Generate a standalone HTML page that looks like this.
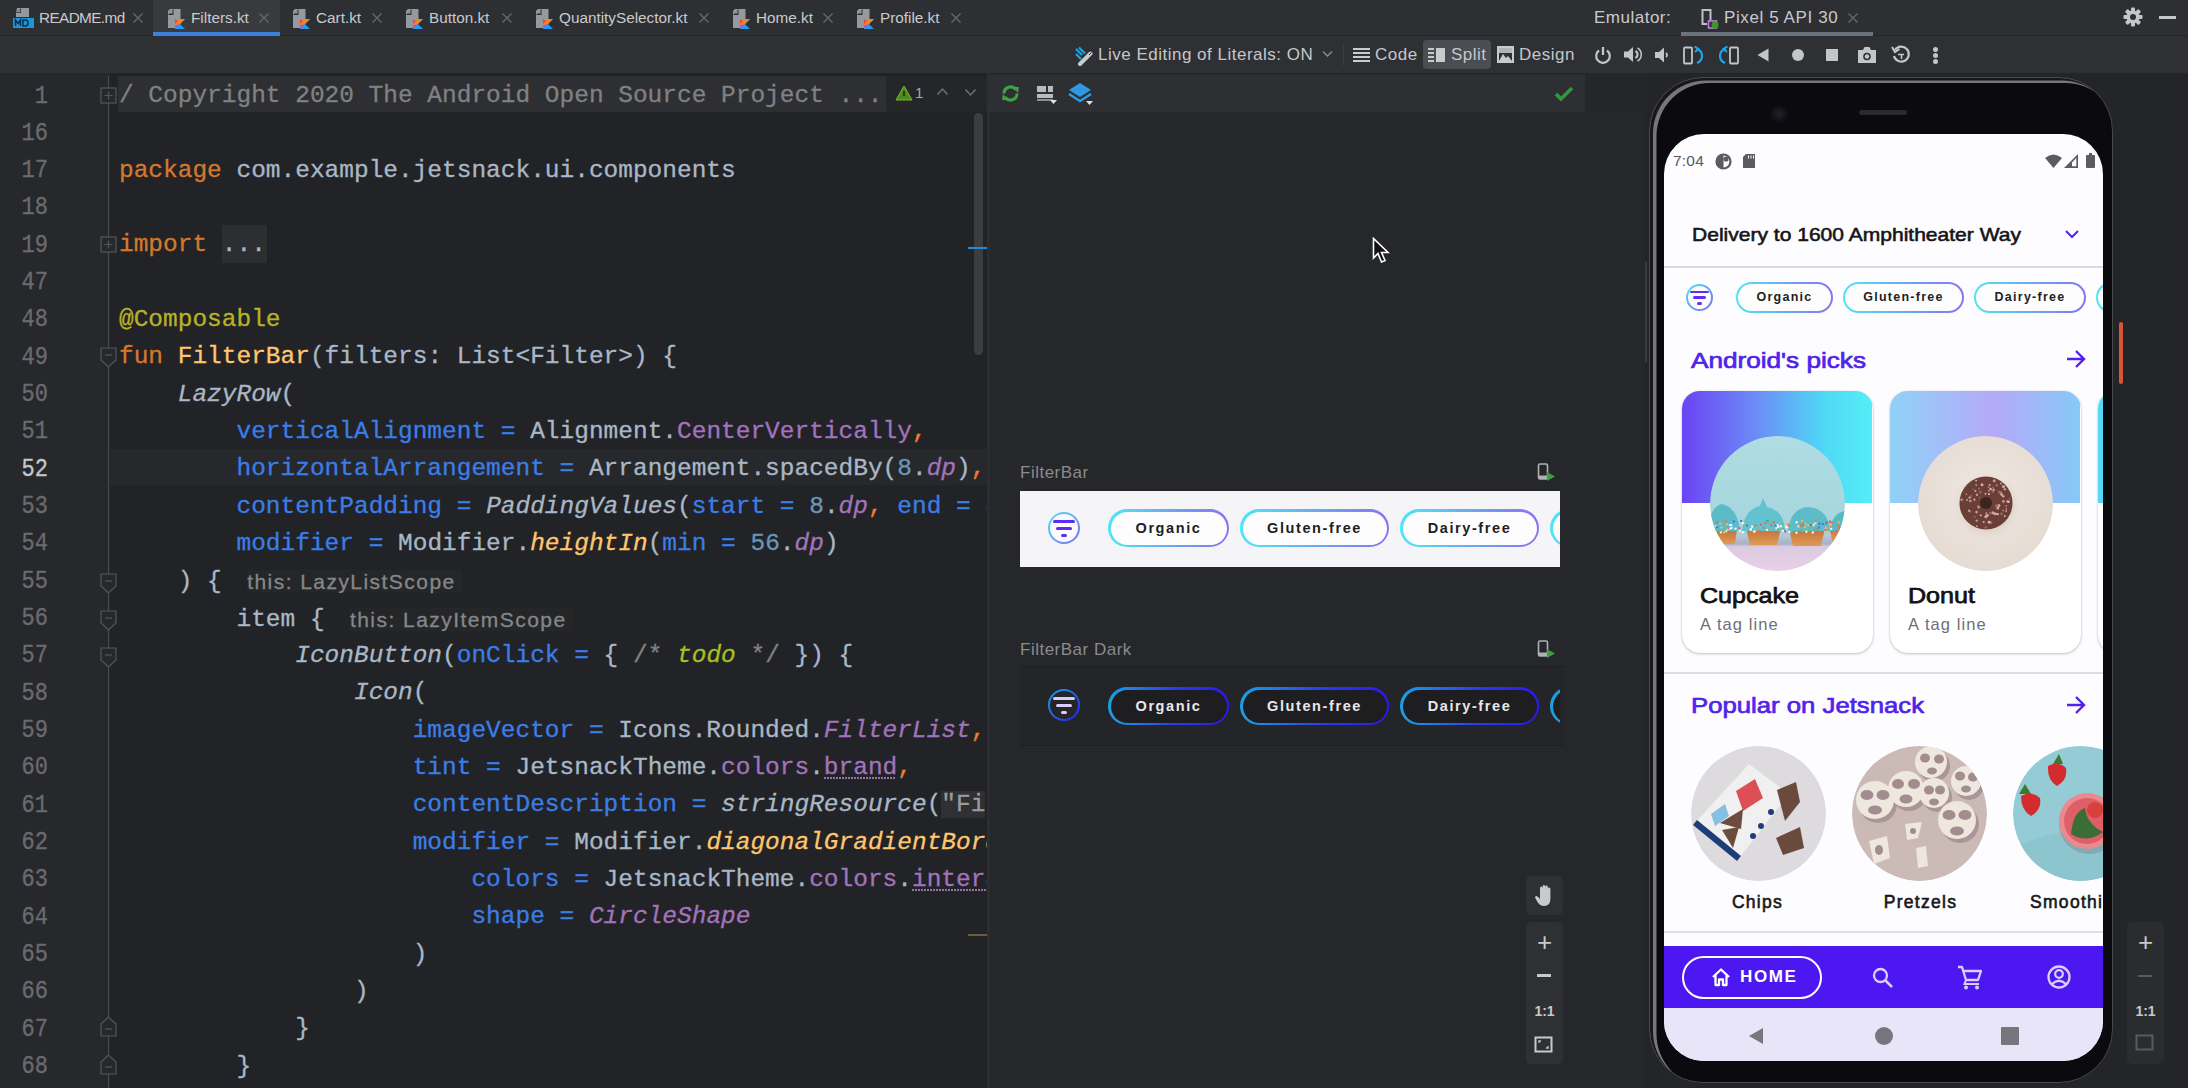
<!DOCTYPE html>
<html><head><meta charset="utf-8">
<style>
*{margin:0;padding:0;box-sizing:border-box}
html,body{width:2188px;height:1088px;overflow:hidden;background:#242528}
body{position:relative;font-family:"Liberation Sans",sans-serif}
.abs{position:absolute}
#tabbar{left:0;top:0;width:2188px;height:36px;background:#2e2f33;border-bottom:1px solid #252629}
#toolbar{left:0;top:36px;width:2188px;height:37px;background:#2f3034}
.tab{position:absolute;top:0;height:36px;font-size:15.3px;color:#c9cacc;line-height:36px;white-space:nowrap}
.tabx{position:absolute;top:0;height:36px;font-size:17px;color:#6b6c70;line-height:35px}
.tb{position:absolute;top:36px;height:37px;line-height:37px;font-size:17px;color:#c6c7c9;white-space:nowrap;letter-spacing:0.5px}
/* editor */
#gutter{left:0;top:73px;width:110px;height:1015px;background:#27282b}
#editor{left:110px;top:73px;width:877px;height:1015px;background:#222326;overflow:hidden}
.ln{position:absolute;left:0;width:48px;text-align:right;font-family:"Liberation Mono",monospace;font-size:22px;color:#6a6b6f;height:37.33px;line-height:37.33px;transform:scaleY(1.18);-webkit-text-stroke:0.3px currentColor}
.cl{position:absolute;left:119px;font-family:"Liberation Mono",monospace;font-size:24.48px;color:#a9b7c6;white-space:pre;height:37.33px;line-height:37.33px;-webkit-text-stroke:0.3px currentColor}
.k{color:#d5782d}.an{color:#b8b22a}.fn{color:#ffc66d}.p{color:#3b7de6}.pu{color:#a273bd}.nu{color:#6897bb}.it{font-style:italic}
.cm{color:#808184}.str{background:#2f3033;color:#9a9b9e}.td{color:#a8c023;font-style:italic}.cmm{color:#ee7d30}
.hint{font-family:"Liberation Sans",sans-serif;font-size:21px;color:#86878a;background:#252628;letter-spacing:1.45px;padding:0 6px 0 0;margin-left:-4px;position:relative;top:1px}
#design{left:990px;top:73px;width:655px;height:1015px;background:#26272a}
#emu{left:1645px;top:73px;width:543px;height:1015px;background:#242528}

.lbl{font-size:17px;color:#8a8b8e;letter-spacing:0.5px;line-height:22px;white-space:nowrap}
.ficon{position:absolute;width:32px;height:32px;border-radius:50%;background:linear-gradient(135deg,#4fe3f3,#7c6cf0) ;}
.ficon::before{content:"";position:absolute;left:2px;top:2px;right:2px;bottom:2px;border-radius:50%;background:#fbfafc}
.ficon i{position:absolute;height:3px;background:#5b2ef2;border-radius:1.5px}
.ficon.dk{background:linear-gradient(135deg,#18a8e6,#2a1cf2)}
.ficon.dk::before{background:#242528}
.ficon.dk i{background:#d9cdf5}
.chip{position:absolute;top:18px;height:38px;border-radius:19px;background:linear-gradient(90deg,#4fe6f5,#6f9ef2 60%,#8a73f0);font-weight:bold;font-size:14.5px;letter-spacing:1.6px;color:#1f1e22;text-align:center;line-height:38px;overflow:hidden}
.chip::before{content:"";position:absolute;left:2.5px;top:2.5px;right:2.5px;bottom:2.5px;border-radius:17px;background:#fdfdfe;z-index:-0}
.chip{isolation:isolate}
.chip::before{z-index:-1}
.chip.dk{top:20px;background:linear-gradient(90deg,#19a4e3,#2a3cf0 55%,#2a17f5);color:#e8e8ea}
.chip.dk::before{background:#1e1d20}
.zc{width:37px;text-align:center;color:#c8c9cc;line-height:30px}

.ficon.sm{width:27px;height:27px}
.ficon.sm i{height:2.6px}
.chip.sm{top:148px;height:31px;border-radius:16px;font-size:12.5px;letter-spacing:1.25px;line-height:31px}
.chip.sm::before{left:2.2px;top:2.2px;right:2.2px;bottom:2.2px;border-radius:14px}
.mont{white-space:nowrap;transform-origin:0 0;-webkit-text-stroke:0.55px currentColor}
.sect{font-size:22.5px;color:#5023ea;white-space:nowrap;line-height:30px;transform-origin:0 0;-webkit-text-stroke:0.7px currentColor}
.card{position:absolute;top:257px;width:191px;height:262px;border-radius:18px;background:#fff;overflow:hidden;box-shadow:0 1px 3px rgba(0,0,0,0.22),0 0 1px rgba(0,0,0,0.2)}
.img{width:135px;height:135px;border-radius:50%;overflow:hidden}
.ctitle{font-size:22.5px;color:#121114;line-height:28px;white-space:nowrap;transform-origin:0 0;-webkit-text-stroke:0.75px currentColor}
.ctag{font-size:16.5px;color:#707073;letter-spacing:1.1px;line-height:20px;white-space:nowrap}
.plbl{font-size:17.5px;color:#18171a;text-align:center;letter-spacing:1.3px;line-height:22px;white-space:nowrap;-webkit-text-stroke:0.6px currentColor}
.cup{background:
 radial-gradient(ellipse 20px 10px at 30% 70%, #c9803f 60%, transparent 62%),
 radial-gradient(ellipse 22px 12px at 57% 71%, #c67a3c 60%, transparent 62%),
 radial-gradient(ellipse 22px 12px at 82% 71%, #c67a3c 60%, transparent 62%),
 radial-gradient(ellipse 22px 14px at 32% 56%, #4aa9b8 60%, transparent 62%),
 radial-gradient(ellipse 24px 16px at 57% 55%, #4fb0bf 60%, transparent 62%),
 radial-gradient(ellipse 24px 15px at 83% 56%, #4aaab8 60%, transparent 62%),
 linear-gradient(180deg,#a5d7de 0%,#b2dde3 45%,#9cc9cf 58%,#c8a090 72%,#e3cbd8 82%,#e6cde2 100%)}
.don{background:
 radial-gradient(circle at 50% 50%, #3a2a25 0, #3a2a25 5px, #6e4035 7px, #7a4a3d 18px, #c9b3a8 22px, #e8ddd5 28px, #ede4dc 100%)}
.chips{background:
 radial-gradient(ellipse 14px 10px at 72% 55%, #6b4a3e 60%, transparent 64%),
 radial-gradient(ellipse 14px 12px at 70% 75%, #6b4a3e 60%, transparent 64%),
 radial-gradient(ellipse 30px 40px at 45% 55%, #e9e6ea 55%, transparent 62%),
 linear-gradient(160deg,#d6d5d9,#e1dfe3)}
.pretz{background:
 radial-gradient(circle 12px at 35% 40%, transparent 5px, #efe9e4 6px, #efe9e4 10px, transparent 11px),
 radial-gradient(circle 12px at 60% 28%, transparent 5px, #efe9e4 6px, #efe9e4 10px, transparent 11px),
 radial-gradient(circle 12px at 75% 50%, transparent 5px, #efe9e4 6px, #efe9e4 10px, transparent 11px),
 radial-gradient(circle 12px at 45% 65%, transparent 5px, #efe9e4 6px, #efe9e4 10px, transparent 11px),
 radial-gradient(circle 12px at 80% 20%, transparent 5px, #efe9e4 6px, #efe9e4 10px, transparent 11px),
 linear-gradient(160deg,#cdbcba,#c8b5b3)}
.smoo{background:
 radial-gradient(circle 10px at 40% 25%, #d3262e 70%, transparent 75%),
 radial-gradient(circle 10px at 25% 45%, #d3262e 70%, transparent 75%),
 radial-gradient(circle 30px at 80% 65%, #3d6e3a 20%, #d34b55 45%, #e98a8f 80%, transparent 84%),
 linear-gradient(160deg,#9ed3dc,#86c3cf)}
</style></head><body>

<div id="tabbar" class="abs"></div>
<div id="toolbar" class="abs"></div>
<!-- active tab -->
<div class="abs" style="left:153px;top:0;width:127px;height:36px;background:#393a3e"></div>
<div class="abs" style="left:153px;top:32px;width:127px;height:4px;background:#3d7fd9"></div>

<div class="tab" style="left:39px;letter-spacing:-0.6px">README.md</div>
<div class="tab" style="left:191px">Filters.kt</div>
<div class="tab" style="left:316px">Cart.kt</div>
<div class="tab" style="left:429px">Button.kt</div>
<div class="tab" style="left:559px">QuantitySelector.kt</div>
<div class="tab" style="left:756px">Home.kt</div>
<div class="tab" style="left:880px">Profile.kt</div>

<div class="tb" style="left:1098px">Live Editing of Literals: ON</div>
<div class="tb" style="left:1375px">Code</div>
<div class="abs" style="left:1423px;top:40px;width:68px;height:29px;background:#4a4d52;border-radius:4px"></div>
<div class="tb" style="left:1451px">Split</div>
<div class="tb" style="left:1519px">Design</div>

<div class="tab" style="left:1594px;font-size:17px;letter-spacing:0.5px">Emulator:</div>
<div class="tab" style="left:1724px;font-size:17px;letter-spacing:0.6px">Pixel 5 API 30</div>
<div class="abs" style="left:1681px;top:32px;width:192px;height:4px;background:#6c7279"></div>


<!-- TOP ICONS -->
<svg width="0" height="0" style="position:absolute">
 <defs>
  <symbol id="ktfile" viewBox="0 0 20 22">
   <path d="M3 1 L13.5 1 L13.5 12 L8 12 L8 20 L1 20 L1 3 Z" fill="#9599a0"/>
   <path d="M1 7 L6.5 1 L6.5 7 Z" fill="#2e2f33"/>
   <path d="M2 5.5 L5.5 2 L5.5 5.5 Z" fill="#9599a0"/>
   <path d="M8 11 L18 11 L13 16 L18 21 L8 21 Z" fill="#1f9af5"/>
   <path d="M8 11 L18 11 L8 21 Z" fill="#f28520"/>
   <path d="M8 16 L11 13.2 L8 11 Z" fill="#e44857"/>
   <path d="M8 21 L13 16 L8 17.5 Z" fill="#8a5df2"/>
  </symbol>
  <symbol id="xx" viewBox="0 0 12 12"><path d="M1.5 1.5 L10.5 10.5 M10.5 1.5 L1.5 10.5" stroke="#68696d" stroke-width="1.3"/></symbol>
 </defs>
</svg>
<!-- MD icon -->
<svg class="abs" style="left:12px;top:7px" width="23" height="22" viewBox="0 0 23 22">
 <path d="M5 1 L17 1 L17 10 L4 10 L4 6 Z" fill="#9599a0"/>
 <path d="M4 6 L9 1 L9 6 Z" fill="#2e2f33"/><path d="M5 5.2 L8.2 2 L8.2 5.2 Z" fill="#9599a0"/>
 <rect x="1" y="11" width="21" height="10" fill="#1a98d4"/>
 <path d="M3.5 19 L3.5 13 L6 16.5 L8.5 13 L8.5 19 M11 13 L11 19 L13.5 19 Q16 19 16 16 Q16 13 13.5 13 Z" stroke="#102a5a" stroke-width="1.5" fill="none"/>
</svg>
<svg class="abs" style="left:167px;top:8px" width="20" height="22"><use href="#ktfile"/></svg>
<svg class="abs" style="left:292px;top:8px" width="20" height="22"><use href="#ktfile"/></svg>
<svg class="abs" style="left:405px;top:8px" width="20" height="22"><use href="#ktfile"/></svg>
<svg class="abs" style="left:535px;top:8px" width="20" height="22"><use href="#ktfile"/></svg>
<svg class="abs" style="left:732px;top:8px" width="20" height="22"><use href="#ktfile"/></svg>
<svg class="abs" style="left:856px;top:8px" width="20" height="22"><use href="#ktfile"/></svg>
<svg class="abs" style="left:132px;top:12px" width="12" height="12"><use href="#xx"/></svg>
<svg class="abs" style="left:258px;top:12px" width="12" height="12"><use href="#xx"/></svg>
<svg class="abs" style="left:371px;top:12px" width="12" height="12"><use href="#xx"/></svg>
<svg class="abs" style="left:501px;top:12px" width="12" height="12"><use href="#xx"/></svg>
<svg class="abs" style="left:698px;top:12px" width="12" height="12"><use href="#xx"/></svg>
<svg class="abs" style="left:822px;top:12px" width="12" height="12"><use href="#xx"/></svg>
<svg class="abs" style="left:950px;top:12px" width="12" height="12"><use href="#xx"/></svg>
<svg class="abs" style="left:1847px;top:12px" width="12" height="12"><use href="#xx"/></svg>
<!-- pixel device icon -->
<svg class="abs" style="left:1701px;top:8px" width="20" height="21" viewBox="0 0 20 21">
 <path d="M9.5 12 L9.5 2 L1.5 2 L1.5 16 L6 16" stroke="#b9c0c8" stroke-width="2" fill="none"/>
 <rect x="7.5" y="13" width="8" height="7" stroke="#c07fe0" stroke-width="1.6" fill="none"/>
 <circle cx="14" cy="17" r="3.5" fill="#3a9a22"/>
</svg>
<!-- gear & minus -->
<svg class="abs" style="left:2123px;top:7px" width="20" height="20" viewBox="0 0 20 20">
 <g fill="#c4c5c8"><circle cx="10" cy="10" r="6.5"/>
 <rect x="8" y="0.5" width="4" height="19" rx="1"/><rect x="0.5" y="8" width="19" height="4" rx="1"/>
 <rect x="8" y="0.5" width="4" height="19" rx="1" transform="rotate(45 10 10)"/><rect x="8" y="0.5" width="4" height="19" rx="1" transform="rotate(-45 10 10)"/></g>
 <circle cx="10" cy="10" r="3" fill="#2e2f33"/>
</svg>
<div class="abs" style="left:2159px;top:16px;width:17px;height:3px;background:#c4c5c8"></div>

<!-- toolbar row icons -->
<svg class="abs" style="left:1074px;top:46px" width="21" height="20" viewBox="0 0 21 20">
 <path d="M2 3 L8 9 M5 1.5 L11 7.5 M2 8 L7 13" stroke="#1fa3e6" stroke-width="2.2"/>
 <path d="M6 18 L16.5 7.5" stroke="#c9cacc" stroke-width="4" stroke-linecap="round"/>
 <path d="M15 9 L17.5 6.5" stroke="#2f3034" stroke-width="1"/>
</svg>
<svg class="abs" style="left:1322px;top:50px" width="11" height="8" viewBox="0 0 11 8"><path d="M1 1.5 L5.5 6 L10 1.5" stroke="#8a8b8e" stroke-width="1.4" fill="none"/></svg>
<div class="abs" style="left:1343px;top:44px;width:1px;height:22px;background:#3a3b3f"></div>
<svg class="abs" style="left:1353px;top:47px" width="17" height="16" viewBox="0 0 17 16">
 <path d="M0 2 L17 2 M0 6 L17 6 M0 10 L17 10 M0 14 L17 14" stroke="#c9cacc" stroke-width="2"/>
</svg>
<svg class="abs" style="left:1428px;top:47px" width="18" height="16" viewBox="0 0 18 16">
 <path d="M0 2 L6 2 M0 6 L6 6 M0 10 L6 10 M0 14 L6 14" stroke="#c9cacc" stroke-width="2"/>
 <rect x="8" y="1" width="9" height="14" fill="#c9cacc"/>
</svg>
<svg class="abs" style="left:1497px;top:46px" width="17" height="17" viewBox="0 0 17 17">
 <rect x="1" y="1" width="15" height="15" stroke="#c9cacc" stroke-width="2" fill="none"/>
 <path d="M2 15 L6 8 L9 12 L11 10 L15 15 Z" fill="#c9cacc"/>
 <rect x="2" y="2" width="13" height="5" fill="#c9cacc" opacity="0.85"/>
</svg>
<!-- emulator controls -->
<g></g>
<svg class="abs" style="left:1594px;top:46px" width="18" height="18" viewBox="0 0 18 18">
 <path d="M5 4.5 A6.8 6.8 0 1 0 13 4.5" stroke="#c4c5c8" stroke-width="2.2" fill="none"/><path d="M9 1 L9 9" stroke="#c4c5c8" stroke-width="2.3"/>
</svg>
<svg class="abs" style="left:1623px;top:46px" width="19" height="17" viewBox="0 0 19 17">
 <path d="M1 5.5 L5 5.5 L10 1 L10 16 L5 11.5 L1 11.5 Z" fill="#c4c5c8"/>
 <path d="M12.5 5 A4 4 0 0 1 12.5 12" stroke="#c4c5c8" stroke-width="2.2" fill="none"/>
 <path d="M14.5 2 A7.5 7.5 0 0 1 14.5 15" stroke="#c4c5c8" stroke-width="1.5" fill="none"/>
</svg>
<svg class="abs" style="left:1654px;top:47px" width="15" height="16" viewBox="0 0 15 16">
 <path d="M1 5 L5 5 L10 0.5 L10 15.5 L5 11 L1 11 Z" fill="#c4c5c8"/>
 <path d="M12 6 A2.5 2.5 0 0 1 12 10" stroke="#c4c5c8" stroke-width="1.8" fill="none"/>
</svg>
<svg class="abs" style="left:1683px;top:46px" width="21" height="19" viewBox="0 0 21 19">
 <rect x="1" y="1.5" width="8" height="16" rx="1" stroke="#c4c5c8" stroke-width="1.8" fill="none"/>
 <path d="M13 3 Q19 4 19 10 Q19 15 14 17" stroke="#1fa3e6" stroke-width="2.2" fill="none"/><path d="M11.5 0.5 L15.5 3 L12 6" stroke="#1fa3e6" stroke-width="2" fill="none"/>
</svg>
<svg class="abs" style="left:1718px;top:46px" width="21" height="19" viewBox="0 0 21 19">
 <rect x="12" y="1.5" width="8" height="16" rx="1" stroke="#c4c5c8" stroke-width="1.8" fill="none"/>
 <path d="M8 3 Q2 4 2 10 Q2 15 7 17" stroke="#1fa3e6" stroke-width="2.2" fill="none"/><path d="M9.5 0.5 L5.5 3 L9 6" stroke="#1fa3e6" stroke-width="2" fill="none"/>
</svg>
<svg class="abs" style="left:1757px;top:48px" width="12" height="14" viewBox="0 0 12 14"><path d="M0.5 7 L11.5 0.5 L11.5 13.5 Z" fill="#c4c5c8"/></svg>
<div class="abs" style="left:1792px;top:49px;width:12px;height:12px;border-radius:50%;background:#c4c5c8"></div>
<div class="abs" style="left:1826px;top:49px;width:12px;height:12px;background:#c4c5c8"></div>
<svg class="abs" style="left:1857px;top:46px" width="20" height="18" viewBox="0 0 20 18">
 <path d="M1 4 L6 4 L7.5 1 L12.5 1 L14 4 L19 4 L19 17 L1 17 Z" fill="#c4c5c8"/>
 <circle cx="10" cy="10.5" r="3.8" fill="#2f3034"/><circle cx="10" cy="10.5" r="2.2" fill="#c4c5c8"/>
</svg>
<svg class="abs" style="left:1891px;top:45px" width="20" height="19" viewBox="0 0 20 19">
 <path d="M4 5 A7.5 7.5 0 1 1 3 11" stroke="#c4c5c8" stroke-width="2.2" fill="none"/><path d="M1 2 L4 7 L8.5 4" stroke="#c4c5c8" stroke-width="2" fill="none"/>
 <path d="M7 9.5 L13 9.5 M10.5 9.5 L10.5 14" stroke="#c4c5c8" stroke-width="1.6"/>
</svg>
<div class="abs" style="left:1933px;top:47px;width:5px;height:5px;border-radius:50%;background:#c4c5c8"></div>
<div class="abs" style="left:1933px;top:53px;width:5px;height:5px;border-radius:50%;background:#c4c5c8"></div>
<div class="abs" style="left:1933px;top:59px;width:5px;height:5px;border-radius:50%;background:#c4c5c8"></div>

<div id="gutter" class="abs"></div>
<div id="editor" class="abs"></div>
<div class="abs" id="code" style="left:0;top:0;width:987px;height:1088px;overflow:hidden">
<!-- folded line 1 highlight -->
<div class="abs" style="left:118px;top:76px;width:770px;height:36px;background:#2e2f32"></div>
<!-- current line 52 highlight -->
<div class="abs" style="left:110px;top:449px;width:877px;height:36px;background:#27282b"></div>
<!-- gutter fold line -->
<div class="abs" style="left:108px;top:76px;width:1px;height:1012px;background:#4a4b4f"></div>

<svg width="0" height="0" style="position:absolute"><defs>
 <symbol id="fdn" viewBox="0 0 17 21"><path d="M1 1 L16 1 L16 13 L8.5 20 L1 13 Z" fill="#27282b" stroke="#55565a" stroke-width="1.2"/><path d="M5 8 L12 8" stroke="#55565a" stroke-width="1.2"/></symbol>
 <symbol id="fup" viewBox="0 0 17 21"><path d="M1 20 L16 20 L16 8 L8.5 1 L1 8 Z" fill="#27282b" stroke="#55565a" stroke-width="1.2"/><path d="M5 13 L12 13" stroke="#55565a" stroke-width="1.2"/></symbol>
 <symbol id="fpl" viewBox="0 0 17 17"><rect x="1" y="1" width="15" height="15" fill="#27282b" stroke="#55565a" stroke-width="1.2"/><path d="M4.5 8.5 L12.5 8.5 M8.5 4.5 L8.5 12.5" stroke="#55565a" stroke-width="1.2"/></symbol>
</defs></svg>
<svg class="abs" style="left:100px;top:87px" width="17" height="17"><use href="#fpl"/></svg>
<svg class="abs" style="left:100px;top:236px" width="17" height="17"><use href="#fpl"/></svg>
<svg class="abs" style="left:100px;top:347px" width="17" height="21"><use href="#fdn"/></svg>
<svg class="abs" style="left:100px;top:573px" width="17" height="21"><use href="#fdn"/></svg>
<svg class="abs" style="left:100px;top:610px" width="17" height="21"><use href="#fdn"/></svg>
<svg class="abs" style="left:100px;top:647px" width="17" height="21"><use href="#fdn"/></svg>
<svg class="abs" style="left:100px;top:1016px" width="17" height="21"><use href="#fup"/></svg>
<svg class="abs" style="left:100px;top:1054px" width="17" height="21"><use href="#fup"/></svg>
<!-- import dots box -->
<div class="abs" style="left:222px;top:225px;width:45px;height:38px;background:#2d2e31"></div>
<!-- warning badge -->
<div class="abs" style="left:886px;top:76px;width:101px;height:35px;background:#252629"></div>
<svg class="abs" style="left:895px;top:85px" width="18" height="16" viewBox="0 0 18 16"><path d="M9 1 L17 15 L1 15 Z" fill="#4a8a1e" stroke="#7fb528" stroke-width="1"/><path d="M9 6 L9 11" stroke="#1d2d0a" stroke-width="1.6"/></svg>
<div class="abs" style="left:915px;top:83px;font-size:15px;color:#a8a9ac;line-height:20px">1</div>
<svg class="abs" style="left:936px;top:87px" width="13" height="9" viewBox="0 0 13 9"><path d="M1.5 7.5 L6.5 2 L11.5 7.5" stroke="#6f7074" stroke-width="1.5" fill="none"/></svg>
<svg class="abs" style="left:964px;top:88px" width="13" height="9" viewBox="0 0 13 9"><path d="M1.5 1.5 L6.5 7 L11.5 1.5" stroke="#6f7074" stroke-width="1.5" fill="none"/></svg>
<!-- scrollbar -->
<div class="abs" style="left:974px;top:113px;width:9px;height:242px;background:#3c3d41;border-radius:4.5px"></div>
<div class="abs" style="left:968px;top:247px;width:19px;height:2px;background:#2a8ad8"></div>
<div class="abs" style="left:968px;top:934px;width:19px;height:2px;background:#6e5a3a"></div>
<!-- underline / string bg -->
<div class="abs" style="left:824px;top:777px;width:72px;height:2px;background:repeating-linear-gradient(90deg,#8f74a5 0 2px,transparent 2px 3px)"></div>
<div class="abs" style="left:912px;top:889px;width:75px;height:2px;background:repeating-linear-gradient(90deg,#8f74a5 0 2px,transparent 2px 3px)"></div>
<div class="ln" style="top:77.50px">1</div>
<div class="cl" style="top:77.00px"><span class="cm">/ Copyright 2020 The Android Open Source Project ...</span></div>
<div class="ln" style="top:114.83px">16</div>
<div class="ln" style="top:152.16px">17</div>
<div class="cl" style="top:151.66px"><span class="k">package</span> com.example.jetsnack.ui.components</div>
<div class="ln" style="top:189.49px">18</div>
<div class="ln" style="top:226.82px">19</div>
<div class="cl" style="top:226.32px"><span class="k">import</span> <span class="dots">...</span></div>
<div class="ln" style="top:264.15px">47</div>
<div class="ln" style="top:301.48px">48</div>
<div class="cl" style="top:300.98px"><span class="an">@Composable</span></div>
<div class="ln" style="top:338.81px">49</div>
<div class="cl" style="top:338.31px"><span class="k">fun</span> <span class="fn">FilterBar</span>(filters: List&lt;Filter&gt;) {</div>
<div class="ln" style="top:376.14px">50</div>
<div class="cl" style="top:375.64px">    <span class="it">LazyRow</span>(</div>
<div class="ln" style="top:413.47px">51</div>
<div class="cl" style="top:412.97px">        <span class="p">verticalAlignment =</span> Alignment.<span class="pu">CenterVertically</span><span class="cmm">,</span></div>
<div class="ln" style="top:450.80px;color:#c5c6c9">52</div>
<div class="cl" style="top:450.30px">        <span class="p">horizontalArrangement =</span> Arrangement.spacedBy(<span class="nu">8</span>.<span class="pu it">dp</span>)<span class="cmm">,</span></div>
<div class="ln" style="top:488.13px">53</div>
<div class="cl" style="top:487.63px">        <span class="p">contentPadding =</span> <span class="it">PaddingValues</span>(<span class="p">start =</span> <span class="nu">8</span>.<span class="pu it">dp</span><span class="cmm">,</span> <span class="p">end =</span> <span class="nu">8</span></div>
<div class="ln" style="top:525.46px">54</div>
<div class="cl" style="top:524.96px">        <span class="p">modifier =</span> Modifier.<span class="fn it">heightIn</span>(<span class="p">min =</span> <span class="nu">56</span>.<span class="pu it">dp</span>)</div>
<div class="ln" style="top:562.79px">55</div>
<div class="cl" style="top:562.29px">    ) {  <span class="hint">this: LazyListScope</span></div>
<div class="ln" style="top:600.12px">56</div>
<div class="cl" style="top:599.62px">        item {  <span class="hint">this: LazyItemScope</span></div>
<div class="ln" style="top:637.45px">57</div>
<div class="cl" style="top:636.95px">            <span class="it">IconButton</span>(<span class="p">onClick =</span> { <span class="cm">/*</span> <span class="td">todo</span> <span class="cm">*/</span> }) {</div>
<div class="ln" style="top:674.78px">58</div>
<div class="cl" style="top:674.28px">                <span class="it">Icon</span>(</div>
<div class="ln" style="top:712.11px">59</div>
<div class="cl" style="top:711.61px">                    <span class="p">imageVector =</span> Icons.Rounded.<span class="pu it">FilterList</span><span class="cmm">,</span></div>
<div class="ln" style="top:749.44px">60</div>
<div class="cl" style="top:748.94px">                    <span class="p">tint =</span> JetsnackTheme.<span class="pu">colors</span>.<span class="pu ul">brand</span><span class="cmm">,</span></div>
<div class="ln" style="top:786.77px">61</div>
<div class="cl" style="top:786.27px">                    <span class="p">contentDescription =</span> <span class="it">stringResource</span>(<span class="str">"Fi</span></div>
<div class="ln" style="top:824.10px">62</div>
<div class="cl" style="top:823.60px">                    <span class="p">modifier =</span> Modifier.<span class="fn it">diagonalGradientBorder</span></div>
<div class="ln" style="top:861.43px">63</div>
<div class="cl" style="top:860.93px">                        <span class="p">colors =</span> JetsnackTheme.<span class="pu">colors</span>.<span class="pu ul">interactive</span></div>
<div class="ln" style="top:898.76px">64</div>
<div class="cl" style="top:898.26px">                        <span class="p">shape =</span> <span class="pu it">CircleShape</span></div>
<div class="ln" style="top:936.09px">65</div>
<div class="cl" style="top:935.59px">                    )</div>
<div class="ln" style="top:973.42px">66</div>
<div class="cl" style="top:972.92px">                )</div>
<div class="ln" style="top:1010.75px">67</div>
<div class="cl" style="top:1010.25px">            }</div>
<div class="ln" style="top:1048.08px">68</div>
<div class="cl" style="top:1047.58px">        }</div>
</div>
<div id="design" class="abs"></div>
<div id="emu" class="abs"></div>

<!-- EMULATOR -->
<!-- phone frame -->
<div class="abs" style="left:1649px;top:77px;width:464px;height:1006px;border-radius:54px;background:#0b0a0e;border:1.5px solid #48494d;box-shadow:inset 3px 2.5px 0 0 #18181b, inset 6.5px 5px 0 0 #76777b"></div>

<!-- camera & speaker -->
<div class="abs" style="left:1770px;top:105px;width:18px;height:18px;border-radius:50%;background:radial-gradient(circle,#1f2430 0,#121318 50%,#0b0a0e 80%)"></div>
<div class="abs" style="left:1859px;top:110px;width:48px;height:5px;border-radius:3px;background:#2a2a2e"></div>
<!-- screen -->
<div class="abs" id="screen" style="left:1664px;top:134px;width:439px;height:927px;border-radius:40px;background:#fdfcfe;overflow:hidden">
 <!-- status bar -->
 <div class="abs" style="left:9px;top:18px;font-size:15.5px;color:#5a5a5c;letter-spacing:0.2px">7:04</div>
 <svg class="abs" style="left:51px;top:19px" width="17" height="17" viewBox="0 0 17 17"><circle cx="8.5" cy="8.5" r="7" fill="none" stroke="#5c5c5e" stroke-width="2.2"/><path d="M8.5 1.5 A7 7 0 0 0 8.5 15.5 Z" fill="#5c5c5e"/><circle cx="11" cy="6" r="2.6" fill="#5c5c5e"/></svg>
 <svg class="abs" style="left:79px;top:20px" width="12" height="14" viewBox="0 0 12 14"><path d="M3 0 L12 0 L12 14 L0 14 L0 3 Z" fill="#5c5c5e"/><rect x="5" y="1.5" width="1" height="3" fill="#fdfcfe"/><rect x="7.5" y="1.5" width="1" height="3" fill="#fdfcfe"/><rect x="10" y="1.5" width="1" height="3" fill="#fdfcfe"/></svg>
 <svg class="abs" style="left:381px;top:20px" width="17" height="14" viewBox="0 0 17 14"><path d="M0 4 Q8.5 -3 17 4 L8.5 14 Z" fill="#5c5c5e"/></svg>
 <svg class="abs" style="left:400px;top:20px" width="14" height="14" viewBox="0 0 14 14"><path d="M14 0 L14 14 L0 14 Z" fill="#5c5c5e"/><path d="M12.3 4 L12.3 12.3 L8 12.3 L8 8.5 Z" fill="#fdfcfe"/></svg>
 <svg class="abs" style="left:422px;top:19px" width="9" height="15" viewBox="0 0 9 15"><rect x="0" y="2" width="9" height="13" rx="1" fill="#5c5c5e"/><rect x="3" y="0" width="3" height="2" fill="#5c5c5e"/></svg>

 <!-- delivery header -->
 <div class="abs mont" style="left:28px;top:89px;font-size:18.5px;color:#151417;line-height:24px;transform:scaleX(1.137)">Delivery to 1600 Amphitheater Way</div>
 <svg class="abs" style="left:400px;top:95px" width="16" height="10" viewBox="0 0 16 10"><path d="M2 2 L8 8 L14 2" stroke="#5023ea" stroke-width="2" fill="none"/></svg>
 <div class="abs" style="left:0;top:132px;width:439px;height:1.5px;background:#dcdbe0"></div>

 <!-- chips -->
 <div class="ficon sm" style="left:22px;top:150px"><i style="top:6.5px;left:4px;width:19px"></i><i style="top:12px;left:7px;width:13px"></i><i style="top:18px;left:11px;width:5px"></i></div>
 <div class="chip sm" style="left:72px;width:97px">Organic</div>
 <div class="chip sm" style="left:179px;width:121px">Gluten-free</div>
 <div class="chip sm" style="left:310px;width:112px">Dairy-free</div>
 <div class="chip sm" style="left:432px;width:100px"></div>

 <!-- android's picks -->
 <div class="abs sect" style="left:27px;top:212px;transform:scaleX(1.162)">Android's picks</div>
 <svg class="abs" style="left:401px;top:215px" width="22" height="20" viewBox="0 0 22 20"><path d="M2 10 L19 10 M11 2 L19 10 L11 18" stroke="#5520ef" stroke-width="2.4" fill="none"/></svg>

 <div class="card" style="left:18px">
  <div class="abs" style="left:0;top:0;width:190px;height:112px;background:linear-gradient(90deg,#6a43f4 0%,#6c8ef6 40%,#4fd9f5 75%,#55edf7 100%)"></div>
  <div class="abs img" style="left:28px;top:45px"><svg width="135" height="135" viewBox="0 0 135 135">
<defs><clipPath id="cc"><circle cx="67.5" cy="67.5" r="67.5"/></clipPath>
<linearGradient id="cupbg" x1="0" y1="0" x2="0" y2="1"><stop offset="0" stop-color="#b0dce3"/><stop offset="0.62" stop-color="#a6d6de"/><stop offset="0.74" stop-color="#b5c8d6"/><stop offset="0.8" stop-color="#aab0c8"/><stop offset="0.82" stop-color="#dccbe0"/><stop offset="1" stop-color="#e9d0e8"/></linearGradient>
<linearGradient id="case" x1="0" y1="0" x2="0" y2="1"><stop offset="0" stop-color="#c0703a"/><stop offset="1" stop-color="#e09a55"/></linearGradient>
</defs>
<g clip-path="url(#cc)">
<rect width="135" height="135" fill="url(#cupbg)"/>
<path d="M5 93 L27 93 L25 108 L8 108 Z" fill="url(#case)"/>
<path d="M36 92 L71 92 L67 109 L40 109 Z" fill="url(#case)"/>
<path d="M79 92 L115 92 L111 110 L83 110 Z" fill="url(#case)"/>
<path d="M120 88 L135 88 L135 106 L122 106 Z" fill="url(#case)"/>
<path d="M-2 95 Q0 70 12 68 Q28 72 30 95 Z" fill="#5bbcc8"/>
<path d="M32 95 Q34 74 50 70 L53 62 L57 71 Q74 74 75 95 Z" fill="#62c2ce"/>
<path d="M78 95 Q80 74 96 71 Q118 71 120 95 Z" fill="#5cbcc9"/>
<path d="M120 95 Q122 77 135 75 L135 95 Z" fill="#58b8c4"/>
<rect x="102.6" y="87.8" width="2" height="2" fill="#ffffff"/><rect x="56.5" y="84.2" width="2" height="2" fill="#3a7bd5"/><rect x="72.3" y="92.3" width="2" height="2" fill="#e8703a"/><rect x="108.4" y="86.7" width="2" height="2" fill="#3a7bd5"/><rect x="118.8" y="95.2" width="2" height="2" fill="#f2c14e"/><rect x="130.8" y="90.7" width="2" height="2" fill="#f2c14e"/><rect x="16.4" y="92.3" width="2" height="2" fill="#ffffff"/><rect x="89.4" y="94.6" width="2" height="2" fill="#e05a8a"/><rect x="90.1" y="92.8" width="2" height="2" fill="#6cc070"/><rect x="71.8" y="93.7" width="2" height="2" fill="#ffffff"/><rect x="0.7" y="85.7" width="2" height="2" fill="#e05a8a"/><rect x="6.0" y="85.1" width="2" height="2" fill="#e8703a"/><rect x="89.0" y="88.5" width="2" height="2" fill="#e8703a"/><rect x="46.1" y="94.2" width="2" height="2" fill="#e8703a"/><rect x="113.9" y="92.1" width="2" height="2" fill="#ffffff"/><rect x="128.6" y="90.9" width="2" height="2" fill="#e8703a"/><rect x="4.9" y="93.2" width="2" height="2" fill="#6cc070"/><rect x="71.4" y="86.9" width="2" height="2" fill="#6cc070"/><rect x="101.1" y="95.2" width="2" height="2" fill="#e8703a"/><rect x="74.3" y="94.4" width="2" height="2" fill="#3a7bd5"/><rect x="111.8" y="86.9" width="2" height="2" fill="#3a7bd5"/><rect x="87.2" y="89.4" width="2" height="2" fill="#ffffff"/><rect x="101.7" y="88.7" width="2" height="2" fill="#f2c14e"/><rect x="80.9" y="95.3" width="2" height="2" fill="#6cc070"/><rect x="56.5" y="85.0" width="2" height="2" fill="#6cc070"/><rect x="31.8" y="95.2" width="2" height="2" fill="#ffffff"/><rect x="130.6" y="89.0" width="2" height="2" fill="#6cc070"/><rect x="102.1" y="92.1" width="2" height="2" fill="#6cc070"/><rect x="92.6" y="85.9" width="2" height="2" fill="#e05a8a"/><rect x="121.1" y="85.8" width="2" height="2" fill="#e8703a"/><rect x="67.2" y="89.8" width="2" height="2" fill="#ffffff"/><rect x="69.8" y="89.3" width="2" height="2" fill="#ffffff"/><rect x="115.8" y="85.6" width="2" height="2" fill="#3a7bd5"/><rect x="19.8" y="90.2" width="2" height="2" fill="#3a7bd5"/><rect x="115.0" y="90.5" width="2" height="2" fill="#f2c14e"/><rect x="90.6" y="94.3" width="2" height="2" fill="#6cc070"/><rect x="115.2" y="91.0" width="2" height="2" fill="#f2c14e"/><rect x="120.1" y="87.7" width="2" height="2" fill="#f2c14e"/><rect x="64.7" y="88.6" width="2" height="2" fill="#3a7bd5"/><rect x="76.9" y="86.9" width="2" height="2" fill="#e05a8a"/><rect x="104.5" y="85.7" width="2" height="2" fill="#ffffff"/><rect x="64.7" y="91.2" width="2" height="2" fill="#e05a8a"/><rect x="78.4" y="94.8" width="2" height="2" fill="#ffffff"/><rect x="75.2" y="89.8" width="2" height="2" fill="#ffffff"/><rect x="9.8" y="95.4" width="2" height="2" fill="#ffffff"/><rect x="119.0" y="84.6" width="2" height="2" fill="#3a7bd5"/><rect x="120.3" y="91.8" width="2" height="2" fill="#ffffff"/><rect x="9.4" y="86.6" width="2" height="2" fill="#f2c14e"/><rect x="32.7" y="86.3" width="2" height="2" fill="#f2c14e"/><rect x="18.6" y="91.5" width="2" height="2" fill="#ffffff"/><rect x="115.9" y="94.8" width="2" height="2" fill="#f2c14e"/><rect x="22.9" y="84.5" width="2" height="2" fill="#3a7bd5"/><rect x="57.1" y="92.7" width="2" height="2" fill="#e8703a"/><rect x="15.9" y="87.2" width="2" height="2" fill="#f2c14e"/><rect x="4.9" y="89.4" width="2" height="2" fill="#ffffff"/><rect x="91.2" y="84.1" width="2" height="2" fill="#f2c14e"/><rect x="44.7" y="88.6" width="2" height="2" fill="#e8703a"/><rect x="28.4" y="91.0" width="2" height="2" fill="#e05a8a"/><rect x="52.8" y="90.5" width="2" height="2" fill="#e8703a"/><rect x="119.3" y="84.9" width="2" height="2" fill="#e05a8a"/><rect x="15.2" y="94.6" width="2" height="2" fill="#f2c14e"/><rect x="13.1" y="95.3" width="2" height="2" fill="#f2c14e"/><rect x="91.6" y="88.4" width="2" height="2" fill="#e05a8a"/><rect x="39.9" y="92.1" width="2" height="2" fill="#ffffff"/><rect x="127.5" y="93.8" width="2" height="2" fill="#e8703a"/><rect x="101.8" y="95.5" width="2" height="2" fill="#ffffff"/><rect x="76.4" y="90.3" width="2" height="2" fill="#ffffff"/><rect x="66.7" y="88.2" width="2" height="2" fill="#ffffff"/><rect x="39.7" y="92.7" width="2" height="2" fill="#ffffff"/><rect x="24.6" y="91.7" width="2" height="2" fill="#ffffff"/><rect x="20.2" y="88.4" width="2" height="2" fill="#ffffff"/><rect x="61.3" y="85.3" width="2" height="2" fill="#6cc070"/><rect x="19.1" y="88.0" width="2" height="2" fill="#ffffff"/><rect x="87.7" y="89.0" width="2" height="2" fill="#f2c14e"/><rect x="87.4" y="89.5" width="2" height="2" fill="#f2c14e"/><rect x="105.6" y="92.5" width="2" height="2" fill="#e8703a"/><rect x="96.6" y="93.1" width="2" height="2" fill="#6cc070"/><rect x="77.7" y="88.7" width="2" height="2" fill="#e8703a"/><rect x="35.9" y="88.6" width="2" height="2" fill="#3a7bd5"/><rect x="5.7" y="90.1" width="2" height="2" fill="#3a7bd5"/><rect x="93.9" y="90.2" width="2" height="2" fill="#f2c14e"/><rect x="127.6" y="89.4" width="2" height="2" fill="#e8703a"/><rect x="47.6" y="94.2" width="2" height="2" fill="#e8703a"/><rect x="20.5" y="91.1" width="2" height="2" fill="#ffffff"/><rect x="15.2" y="93.3" width="2" height="2" fill="#ffffff"/><rect x="15.1" y="92.4" width="2" height="2" fill="#6cc070"/><rect x="56.2" y="92.9" width="2" height="2" fill="#ffffff"/><rect x="17.3" y="91.3" width="2" height="2" fill="#e05a8a"/><rect x="107.8" y="90.5" width="2" height="2" fill="#3a7bd5"/><rect x="76.7" y="86.4" width="2" height="2" fill="#f2c14e"/><rect x="49.9" y="87.5" width="2" height="2" fill="#e05a8a"/><rect x="120.3" y="95.4" width="2" height="2" fill="#e05a8a"/><rect x="42.7" y="94.9" width="2" height="2" fill="#f2c14e"/><rect x="85.5" y="95.7" width="2" height="2" fill="#ffffff"/><rect x="95.4" y="94.7" width="2" height="2" fill="#ffffff"/><rect x="65.3" y="91.2" width="2" height="2" fill="#ffffff"/><rect x="85.6" y="85.3" width="2" height="2" fill="#ffffff"/><rect x="31.6" y="86.1" width="2" height="2" fill="#ffffff"/><rect x="62.2" y="86.3" width="2" height="2" fill="#6cc070"/><rect x="28.6" y="93.8" width="2" height="2" fill="#ffffff"/><rect x="127.8" y="85.3" width="2" height="2" fill="#f2c14e"/><rect x="129.5" y="94.7" width="2" height="2" fill="#3a7bd5"/><rect x="63.1" y="85.1" width="2" height="2" fill="#e8703a"/><rect x="3.4" y="91.4" width="2" height="2" fill="#6cc070"/><rect x="10.5" y="90.5" width="2" height="2" fill="#f2c14e"/><rect x="43.6" y="94.4" width="2" height="2" fill="#ffffff"/><rect x="93.6" y="85.0" width="2" height="2" fill="#6cc070"/><rect x="104.7" y="84.4" width="2" height="2" fill="#e8703a"/><rect x="99.9" y="88.1" width="2" height="2" fill="#3a7bd5"/><rect x="125.8" y="94.3" width="2" height="2" fill="#e05a8a"/><rect x="94.4" y="86.7" width="2" height="2" fill="#f2c14e"/><rect x="14.7" y="84.5" width="2" height="2" fill="#e8703a"/><rect x="114.1" y="92.5" width="2" height="2" fill="#e05a8a"/><rect x="67.1" y="92.4" width="2" height="2" fill="#6cc070"/><rect x="115.0" y="86.5" width="2" height="2" fill="#e05a8a"/><rect x="41.1" y="89.6" width="2" height="2" fill="#ffffff"/><rect x="54.2" y="86.2" width="2" height="2" fill="#e8703a"/><rect x="97.2" y="88.4" width="2" height="2" fill="#f2c14e"/><rect x="60.4" y="88.3" width="2" height="2" fill="#e05a8a"/><rect x="30.2" y="84.0" width="2" height="2" fill="#3a7bd5"/>
</g></svg></div>
  <div class="abs ctitle" style="left:18px;top:191px;transform:scaleX(1.115)">Cupcake</div>
  <div class="abs ctag" style="left:18px;top:223px">A tag line</div>
 </div>
 <div class="card" style="left:226px">
  <div class="abs" style="left:0;top:0;width:190px;height:112px;background:linear-gradient(90deg,#8fd2f7 0%,#a8b8f8 35%,#b5a9f9 55%,#86c9f7 100%)"></div>
  <div class="abs img" style="left:28px;top:45px"><svg width="135" height="135" viewBox="0 0 135 135">
<defs><radialGradient id="donbg" cx="0.5" cy="0.45" r="0.6"><stop offset="0" stop-color="#efe8e1"/><stop offset="1" stop-color="#e4dad2"/></radialGradient>
<radialGradient id="dsh" cx="0.5" cy="0.5" r="0.5"><stop offset="0.55" stop-color="#b9a89c" stop-opacity="0.45"/><stop offset="1" stop-color="#e8dfd7" stop-opacity="0"/></radialGradient></defs>
<circle cx="67.5" cy="67.5" r="67.5" fill="url(#donbg)"/>
<circle cx="69" cy="70" r="36" fill="url(#dsh)"/>
<circle cx="68" cy="67" r="26.5" fill="#6a3f36"/><circle cx="56.4" cy="63.7" r="1.1" fill="#d7a7a0"/><circle cx="85.1" cy="74.5" r="0.8" fill="#d7a7a0"/><circle cx="69.2" cy="79.3" r="1.6" fill="#d7a7a0"/><circle cx="51.6" cy="61.7" r="1.1" fill="#e0b8b8"/><circle cx="74.9" cy="76.7" r="1.5" fill="#d7a7a0"/><circle cx="58.2" cy="48.9" r="0.9" fill="#c9929a"/><circle cx="80.9" cy="69.5" r="1.5" fill="#d7a7a0"/><circle cx="83.9" cy="58.3" r="1.1" fill="#d7a7a0"/><circle cx="72.6" cy="53.0" r="1.2" fill="#e0b8b8"/><circle cx="86.8" cy="80.2" r="0.9" fill="#e0b8b8"/><circle cx="62.2" cy="56.1" r="1.4" fill="#9a6a60"/><circle cx="75.6" cy="53.9" r="1.3" fill="#d7a7a0"/><circle cx="82.8" cy="56.8" r="1.3" fill="#c9929a"/><circle cx="90.5" cy="65.7" r="1.3" fill="#e0b8b8"/><circle cx="58.8" cy="84.6" r="1.2" fill="#c9929a"/><circle cx="72.9" cy="86.5" r="1.5" fill="#9a6a60"/><circle cx="79.8" cy="72.0" r="1.5" fill="#d7a7a0"/><circle cx="71.0" cy="58.0" r="1.1" fill="#e0b8b8"/><circle cx="60.5" cy="70.7" r="1.1" fill="#c9929a"/><circle cx="61.4" cy="61.2" r="0.8" fill="#9a6a60"/><circle cx="83.3" cy="58.8" r="1.0" fill="#e0b8b8"/><circle cx="58.9" cy="90.2" r="0.9" fill="#c9929a"/><circle cx="91.7" cy="62.7" r="1.0" fill="#9a6a60"/><circle cx="78.3" cy="69.8" r="1.5" fill="#9a6a60"/><circle cx="77.1" cy="77.8" r="1.5" fill="#d7a7a0"/><circle cx="52.3" cy="65.0" r="1.3" fill="#c9929a"/><circle cx="85.3" cy="60.2" r="1.2" fill="#d7a7a0"/><circle cx="64.0" cy="48.7" r="1.5" fill="#d7a7a0"/><circle cx="43.6" cy="63.7" r="1.2" fill="#c9929a"/><circle cx="89.3" cy="65.3" r="1.1" fill="#d7a7a0"/><circle cx="55.5" cy="53.4" r="0.8" fill="#9a6a60"/><circle cx="61.2" cy="52.6" r="1.1" fill="#9a6a60"/><circle cx="88.3" cy="69.9" r="0.8" fill="#c9929a"/><circle cx="67.8" cy="91.4" r="1.2" fill="#9a6a60"/><circle cx="72.4" cy="77.1" r="1.4" fill="#9a6a60"/><circle cx="58.6" cy="76.1" r="1.4" fill="#c9929a"/><circle cx="58.1" cy="44.6" r="0.9" fill="#e0b8b8"/><circle cx="65.7" cy="86.0" r="1.1" fill="#d7a7a0"/><circle cx="83.6" cy="77.9" r="1.3" fill="#9a6a60"/><circle cx="71.1" cy="86.2" r="1.4" fill="#e0b8b8"/><circle cx="67.5" cy="57.7" r="1.0" fill="#d7a7a0"/><circle cx="70.9" cy="54.7" r="0.8" fill="#e0b8b8"/><circle cx="74.9" cy="55.6" r="1.3" fill="#9a6a60"/><circle cx="74.5" cy="54.8" r="0.9" fill="#9a6a60"/><circle cx="52.1" cy="75.6" r="1.2" fill="#9a6a60"/><circle cx="57.4" cy="55.1" r="1.0" fill="#d7a7a0"/><circle cx="60.6" cy="71.5" r="1.0" fill="#d7a7a0"/><circle cx="85.5" cy="50.5" r="1.6" fill="#d7a7a0"/><circle cx="85.4" cy="65.4" r="1.4" fill="#c9929a"/><circle cx="78.7" cy="49.3" r="1.3" fill="#9a6a60"/><circle cx="81.3" cy="56.0" r="1.5" fill="#9a6a60"/><circle cx="68.3" cy="77.0" r="0.8" fill="#e0b8b8"/><circle cx="86.8" cy="53.3" r="1.3" fill="#c9929a"/><circle cx="79.7" cy="78.1" r="1.2" fill="#e0b8b8"/><circle cx="49.0" cy="64.0" r="1.1" fill="#c9929a"/><circle cx="67.8" cy="80.8" r="1.5" fill="#d7a7a0"/><circle cx="88.2" cy="75.2" r="1.0" fill="#c9929a"/><circle cx="75.0" cy="51.4" r="0.9" fill="#9a6a60"/><circle cx="76.2" cy="44.8" r="1.5" fill="#c9929a"/><circle cx="53.3" cy="60.0" r="1.1" fill="#9a6a60"/><circle cx="59.0" cy="58.7" r="1.2" fill="#c9929a"/><circle cx="70.7" cy="51.2" r="0.8" fill="#c9929a"/><circle cx="88.3" cy="73.1" r="0.8" fill="#d7a7a0"/><circle cx="83.0" cy="47.5" r="0.9" fill="#d7a7a0"/><circle cx="62.7" cy="79.3" r="1.1" fill="#d7a7a0"/><circle cx="56.5" cy="80.8" r="1.0" fill="#9a6a60"/><circle cx="78.6" cy="78.0" r="0.8" fill="#d7a7a0"/><circle cx="48.3" cy="58.2" r="0.8" fill="#d7a7a0"/><circle cx="71.7" cy="49.1" r="1.1" fill="#c9929a"/><circle cx="51.1" cy="74.7" r="1.1" fill="#d7a7a0"/>
<circle cx="68" cy="67" r="6" fill="#3a2520"/>
</svg></div>
  <div class="abs ctitle" style="left:18px;top:191px;transform:scaleX(1.115)">Donut</div>
  <div class="abs ctag" style="left:18px;top:223px">A tag line</div>
 </div>
 <div class="card" style="left:434px">
  <div class="abs" style="left:0;top:0;width:190px;height:112px;background:linear-gradient(90deg,#55d8f5,#6a8ef6)"></div>
 </div>
 <div class="abs" style="left:0;top:538px;width:439px;height:2px;background:#dedde2"></div>

 <!-- popular -->
 <div class="abs sect" style="left:27px;top:557px;transform:scaleX(1.143)">Popular on Jetsnack</div>
 <svg class="abs" style="left:401px;top:561px" width="22" height="20" viewBox="0 0 22 20"><path d="M2 10 L19 10 M11 2 L19 10 L11 18" stroke="#5520ef" stroke-width="2.4" fill="none"/></svg>
 <div class="abs img" style="left:27px;top:612px"><svg width="135" height="135" viewBox="0 0 135 135">
<circle cx="67.5" cy="67.5" r="67.5" fill="#dddbdd"/>
<path d="M2 79 L58 18 L98 48 L46 115 Z" fill="#f1f0f0"/>
<path d="M2 79 L46 115 L50 110 L6 74 Z" fill="#1f3e78"/>
<path d="M45 45 L64 33 L72 52 L52 65 Z" fill="#d8333a" opacity="0.85"/>
<path d="M20 68 L34 58 L38 70 L24 80 Z" fill="#5aa9d8" opacity="0.7"/>
<circle cx="62" cy="90" r="3" fill="#1f3e78"/><circle cx="70" cy="80" r="3" fill="#1f3e78"/><circle cx="80" cy="66" r="3" fill="#1f3e78"/>
<path d="M29 77 L52 63 L50 83 Z" fill="#6b4c3e"/>
<path d="M31 84 L48 81 L42 102 Z" fill="#6b4c3e"/>
<path d="M86 44 L105 36 L109 56 L94 75 Z" fill="#6a4a3d"/>
<path d="M85 92 L109 81 L113 102 L92 109 Z" fill="#6a4a3d"/>
</svg></div>
 <div class="abs img" style="left:188px;top:612px"><svg width="135" height="135" viewBox="0 0 135 135">
<defs><clipPath id="pc"><circle cx="67.5" cy="67.5" r="67.5"/></clipPath></defs>
<g clip-path="url(#pc)">
<rect width="135" height="135" fill="#cbbab6"/>
<g fill="#a48d92" opacity="0.8">
<circle cx="26" cy="58" r="19"/><circle cx="57" cy="47" r="18"/><circle cx="82" cy="20" r="16"/><circle cx="85" cy="51" r="15"/><circle cx="117" cy="39" r="15"/><circle cx="108" cy="78" r="19"/>
</g>
<g fill="#ede7dd">
<circle cx="23" cy="54" r="19"/><circle cx="54" cy="43" r="18"/><circle cx="79" cy="16" r="16"/><circle cx="82" cy="47" r="15"/><circle cx="114" cy="35" r="15"/><circle cx="105" cy="74" r="19"/>
<path d="M17 95 L35 90 L38 112 L22 118 Z"/><path d="M53 78 L70 76 L66 92 L55 94 Z"/><path d="M64 102 L74 100 L76 120 L66 122 Z"/>
</g>
<g fill="#a38c90">
<ellipse cx="15" cy="49" rx="6.5" ry="5"/><ellipse cx="31" cy="49" rx="6.5" ry="5"/><ellipse cx="23" cy="64" rx="7" ry="4.5"/>
<ellipse cx="46" cy="38" rx="6" ry="5"/><ellipse cx="62" cy="38" rx="6" ry="5"/><ellipse cx="54" cy="53" rx="6.5" ry="4.5"/>
<ellipse cx="73" cy="12" rx="5" ry="4.5"/><ellipse cx="87" cy="13" rx="5" ry="4.5"/><ellipse cx="80" cy="25" rx="5" ry="3.5"/>
<ellipse cx="77" cy="44" rx="5" ry="4.5"/><ellipse cx="88" cy="44" rx="5" ry="4.5"/><ellipse cx="82" cy="56" rx="5" ry="3.5"/>
<ellipse cx="108" cy="30" rx="5" ry="4.5"/><ellipse cx="121" cy="31" rx="5" ry="4.5"/><ellipse cx="114" cy="43" rx="5" ry="3.5"/>
<ellipse cx="97" cy="69" rx="6.5" ry="5"/><ellipse cx="113" cy="69" rx="6.5" ry="5"/><ellipse cx="105" cy="85" rx="7" ry="4.5"/>
<ellipse cx="27" cy="104" rx="4" ry="5"/><ellipse cx="61" cy="85" rx="3" ry="3"/>
</g></g></svg></div>
 <div class="abs img" style="left:349px;top:612px"><svg width="135" height="135" viewBox="0 0 135 135">
<defs><clipPath id="sc"><circle cx="67.5" cy="67.5" r="67.5"/></clipPath></defs>
<g clip-path="url(#sc)">
<rect width="135" height="135" fill="#95cbd5"/>
<path d="M0 100 L135 60 L135 135 L0 135 Z" fill="#88c1cc" opacity="0.6"/>
<circle cx="76" cy="78" r="30" fill="#7e8e94" opacity="0.5"/>
<circle cx="74" cy="75" r="28" fill="#e88a8e"/>
<circle cx="74" cy="75" r="23" fill="#df5f68"/>
<path d="M58 88 Q60 66 72 62 Q74 78 90 86 Q74 98 58 88 Z" fill="#3b6e36"/>
<circle cx="82" cy="64" r="8" fill="#d8403a"/>
<path d="M35 20 Q45 14 53 22 Q55 34 44 40 Q34 34 35 20 Z" fill="#d42b2e"/>
<path d="M40 18 L46 8 L50 18 Z" fill="#3f7a2c"/>
<path d="M8 50 Q18 44 27 52 Q29 64 18 70 Q8 64 8 50 Z" fill="#d42b2e"/>
<path d="M6 48 L12 38 L18 48 Z" fill="#3f7a2c"/>
</g></svg></div>
 <div class="abs plbl" style="left:25px;width:137px;top:757px">Chips</div>
 <div class="abs plbl" style="left:188px;width:137px;top:757px">Pretzels</div>
 <div class="abs plbl" style="left:366px;width:137px;top:757px;text-align:left">Smoothies</div>
 <div class="abs" style="left:0;top:797px;width:439px;height:2px;background:#dedde2"></div>

 <!-- bottom nav -->
 <div class="abs" style="left:0;top:812px;width:439px;height:62px;background:#4d17f1"></div>
 <div class="abs" style="left:18px;top:822px;width:140px;height:43px;border:2.5px solid #fff;border-radius:22px"></div>
 <svg class="abs" style="left:46px;top:832px" width="22" height="22" viewBox="0 0 22 22"><path d="M3 11 L11 3.5 L19 11 M5.5 9 L5.5 19 L9 19 L9 13.5 L13 13.5 L13 19 L16.5 19 L16.5 9" stroke="#fff" stroke-width="2.3" fill="none" stroke-linejoin="round"/></svg>
 <div class="abs" style="left:76px;top:832px;font-size:17px;font-weight:bold;color:#fff;letter-spacing:1.6px;line-height:22px">HOME</div>
 <svg class="abs" style="left:207px;top:832px" width="24" height="24" viewBox="0 0 24 24"><circle cx="9.5" cy="9.5" r="6.5" stroke="#d8d0fb" stroke-width="2.3" fill="none"/><path d="M14.5 14.5 L21 21" stroke="#d8d0fb" stroke-width="2.5"/></svg>
 <svg class="abs" style="left:293px;top:831px" width="26" height="26" viewBox="0 0 26 26"><path d="M1 2 L5 2 L9 15 L21 15 L24 6 L7 6" stroke="#d8d0fb" stroke-width="2.3" fill="none" stroke-linejoin="round"/><path d="M9 15 L7.5 19 L22 19" stroke="#d8d0fb" stroke-width="2" fill="none"/><circle cx="9" cy="22.5" r="2" fill="#d8d0fb"/><circle cx="20" cy="22.5" r="2" fill="#d8d0fb"/></svg>
 <svg class="abs" style="left:382px;top:830px" width="26" height="26" viewBox="0 0 26 26"><circle cx="13" cy="13" r="10.5" stroke="#d8d0fb" stroke-width="2.3" fill="none"/><circle cx="13" cy="10" r="3.8" stroke="#d8d0fb" stroke-width="2.2" fill="none"/><path d="M6 20 Q13 13.5 20 20" stroke="#d8d0fb" stroke-width="2.2" fill="none"/></svg>

 <!-- system nav -->
 <div class="abs" style="left:0;top:874px;width:439px;height:60px;background:#e9e5f9"></div>
 <svg class="abs" style="left:84px;top:893px" width="16" height="18" viewBox="0 0 16 18"><path d="M1 9 L15 1 L15 17 Z" fill="#77767c"/></svg>
 <div class="abs" style="left:211px;top:893px;width:18px;height:18px;border-radius:50%;background:#77767c"></div>
 <div class="abs" style="left:337px;top:893px;width:18px;height:18px;background:#77767c;border-radius:1px"></div>
</div>
<div class="abs" style="left:1645px;top:262px;width:1.5px;height:100px;background:#3a3b3e"></div>
<!-- red side indicator -->
<div class="abs" style="left:2119px;top:322px;width:4px;height:62px;background:#d9553a;border-radius:2px"></div>

<!-- emulator zoom controls -->
<div class="abs" style="left:2127px;top:922px;width:37px;height:142px;background:#2b2c30;border-radius:5px"></div>
<div class="abs zc" style="left:2127px;top:927px;font-size:26px">+</div>
<div class="abs" style="left:2138px;top:975px;width:14px;height:2px;background:#5a5b5f"></div>
<div class="abs zc" style="left:2127px;top:996px;font-size:14px;font-weight:bold">1:1</div>
<svg class="abs" style="left:2135px;top:1034px" width="20" height="18" viewBox="0 0 20 18"><rect x="1.5" y="1.5" width="16" height="14" stroke="#5a5b5f" stroke-width="2" fill="none"/></svg>

<!-- DESIGN PANEL -->
<div class="abs" style="left:987px;top:73px;width:3px;height:1015px;background:#2c2d30"></div>
<div class="abs" style="left:987px;top:75px;width:598px;height:37px;background:#2e2f33"></div>
<div class="abs" style="left:1585px;top:75px;width:60px;height:37px;background:#252629"></div>
<!-- toolbar icons -->
<svg class="abs" style="left:1000px;top:84px" width="21" height="19" viewBox="0 0 21 19">
 <path d="M4 9.5 A6.5 6.5 0 0 1 16 6" stroke="#3ea346" stroke-width="3" fill="none"/>
 <path d="M17 9.5 A6.5 6.5 0 0 1 5 13" stroke="#3ea346" stroke-width="3" fill="none"/>
 <path d="M13 3 L19 3 L18 9 Z" fill="#3ea346"/><path d="M8 16 L2 16 L3 10 Z" fill="#3ea346"/>
</svg>
<svg class="abs" style="left:1036px;top:84px" width="22" height="20" viewBox="0 0 22 20">
 <rect x="1" y="2" width="9" height="6" fill="#b9babd"/><rect x="12" y="2" width="5" height="6" fill="#b9babd"/>
 <rect x="1" y="10" width="16" height="4" fill="#b9babd"/><rect x="1" y="15" width="16" height="2" fill="#8d8e91"/>
 <path d="M14 16 L21 16 L17.5 20 Z" fill="#e0e0e0"/>
</svg>
<svg class="abs" style="left:1068px;top:82px" width="26" height="24" viewBox="0 0 26 24">
 <path d="M12 1 L23 8 L12 15 L1 8 Z" fill="#2e9ae6"/>
 <path d="M1 12 L12 19 L23 12" stroke="#2e9ae6" stroke-width="2.5" fill="none"/>
 <path d="M18 19 L25 19 L21.5 23 Z" fill="#e0e0e0"/>
</svg>
<svg class="abs" style="left:1554px;top:86px" width="20" height="16" viewBox="0 0 20 16">
 <path d="M2 8 L7 13 L18 2" stroke="#2f9a3c" stroke-width="3.5" fill="none"/>
</svg>
<!-- mouse cursor -->
<svg class="abs" style="left:1372px;top:237px" width="20" height="28" viewBox="0 0 20 28">
 <path d="M1.5 1.5 L1.5 21 L6 16.5 L9.5 25 L13 23.5 L9.5 15.5 L16 15.5 Z" fill="#111" stroke="#fff" stroke-width="1.6"/>
</svg>

<!-- FilterBar light -->
<div class="abs lbl" style="left:1020px;top:462px">FilterBar</div>
<svg class="abs" style="left:1537px;top:463px" width="19" height="19" viewBox="0 0 19 19">
 <rect x="1.5" y="1" width="9" height="15" rx="1.5" stroke="#b0b1b4" stroke-width="1.6" fill="none"/>
 <rect x="1.5" y="12.5" width="9" height="3.5" fill="#b0b1b4"/>
 <path d="M10 9 L18 13.5 L10 18 Z" fill="#3f9e45"/>
</svg>
<div class="abs" style="left:1020px;top:491px;width:540px;height:76px;background:#f5f4f7;overflow:hidden">
 <div class="ficon" style="left:28px;top:21px"><i style="top:8px;left:5px;width:22px"></i><i style="top:15px;left:8px;width:16px"></i><i style="top:22px;left:13px;width:6px"></i></div>
 <div class="chip" style="left:88px;width:121px">Organic</div>
 <div class="chip" style="left:220px;width:149px">Gluten-free</div>
 <div class="chip" style="left:380px;width:139px">Dairy-free</div>
 <div class="chip" style="left:530px;width:120px"></div>
</div>

<!-- FilterBar dark -->
<div class="abs lbl" style="left:1020px;top:639px">FilterBar Dark</div>
<svg class="abs" style="left:1537px;top:640px" width="19" height="19" viewBox="0 0 19 19">
 <rect x="1.5" y="1" width="9" height="15" rx="1.5" stroke="#b0b1b4" stroke-width="1.6" fill="none"/>
 <rect x="1.5" y="12.5" width="9" height="3.5" fill="#b0b1b4"/>
 <path d="M10 9 L18 13.5 L10 18 Z" fill="#3f9e45"/>
</svg>
<div class="abs" style="left:1020px;top:666px;width:545px;height:80px;background:#242528;border-top:1px solid #1e1f21;border-bottom:1px solid #1e1f21"></div>
<div class="abs" style="left:1020px;top:667px;width:540px;height:78px;overflow:hidden">
 <div class="ficon dk" style="left:28px;top:22px"><i style="top:8px;left:5px;width:22px"></i><i style="top:15px;left:8px;width:16px"></i><i style="top:22px;left:13px;width:6px"></i></div>
 <div class="chip dk" style="left:88px;width:121px">Organic</div>
 <div class="chip dk" style="left:220px;width:149px">Gluten-free</div>
 <div class="chip dk" style="left:380px;width:139px">Dairy-free</div>
 <div class="chip dk" style="left:530px;width:120px"></div>
</div>

<!-- zoom controls -->
<div class="abs" style="left:1526px;top:876px;width:37px;height:39px;background:#2f3034;border-radius:5px"></div>
<div class="abs" style="left:1526px;top:922px;width:37px;height:142px;background:#2f3034;border-radius:5px"></div>
<svg class="abs" style="left:1534px;top:884px" width="22" height="24" viewBox="0 0 22 24">
 <path d="M6 12 L6 4 Q6 2.5 7.3 2.5 Q8.6 2.5 8.6 4 L8.6 10 L8.6 2.5 Q8.6 1 9.9 1 Q11.2 1 11.2 2.5 L11.2 10 L11.2 3 Q11.2 1.6 12.5 1.6 Q13.8 1.6 13.8 3 L13.8 10 L13.8 5 Q13.8 3.6 15.1 3.6 Q16.4 3.6 16.4 5 L16.4 15 Q16.4 22 10 22 Q6 22 3.5 18 L1 13.5 Q0.8 12 2.5 12 Q4 12.5 6 15 Z" fill="#c8c9cc"/>
</svg>
<div class="abs zc" style="left:1526px;top:927px;font-size:26px">+</div>
<div class="abs" style="left:1537px;top:974px;width:14px;height:2.5px;background:#c8c9cc"></div>
<div class="abs zc" style="left:1526px;top:996px;font-size:14px;font-weight:bold">1:1</div>
<svg class="abs" style="left:1534px;top:1036px" width="20" height="18" viewBox="0 0 20 18">
 <rect x="1.5" y="1.5" width="16" height="14" stroke="#c8c9cc" stroke-width="2" fill="none"/>
 <path d="M5 7 L5 5 L7 5 M12 12 L14 12 L14 10" stroke="#c8c9cc" stroke-width="1.3" fill="none"/>
</svg>


</body></html>
